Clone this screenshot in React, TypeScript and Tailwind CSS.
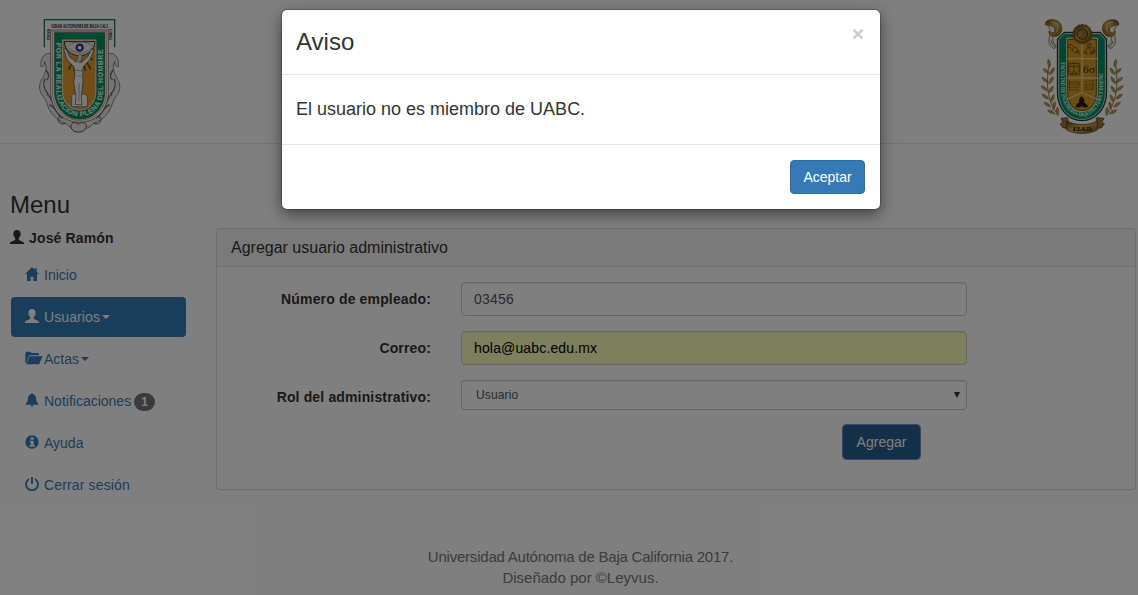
import React from "react";

type IconProps = { className?: string };

function UserIcon({ className = "" }: IconProps) {
  return (
    <svg viewBox="0 0 42 42" className={"inline-block h-3.5 w-3.5 " + className} fill="currentColor">
      <path d="M21 0c-7 0-11 5-11 11 0 4 1 7 3 10 2 3 3 4 3 7 0 2-2 3-5 4-6 2-10 3-11 6L0 42h42v-3c-1-4-5-5-11-7-3-1-5-2-5-4 0-3 1-4 3-7 2-3 3-6 3-10C32 5 28 0 21 0z" />
    </svg>
  );
}

function HomeIcon() {
  return (
    <svg viewBox="0 0 42 42" className="h-3.5 w-3.5" fill="currentColor">
      <path d="M21 0L0 21h6v21h11V29h8v13h11V21h6l-7-7V4h-6v4z" />
    </svg>
  );
}

function FolderIcon() {
  return (
    <svg viewBox="0 0 52 42" className="h-3.5 w-[18px] shrink-0" fill="currentColor">
      <path d="M0 35V6l4-4h11l4 4h19l3 3v4H12L3 35zM13 16h39L41 40H3z" />
    </svg>
  );
}

function BellIcon() {
  return (
    <svg viewBox="0 0 42 42" className="h-3.5 w-3.5" fill="currentColor">
      <path d="M21 0c2 0 3 1 3 4 5 1 9 6 9 12 1 8 2 11 6 14v5H3v-5c4-3 5-6 6-14 0-6 4-11 9-12 0-3 1-4 3-4zM17 37h8c0 6-8 6-8 0z" />
    </svg>
  );
}

function InfoIcon() {
  return (
    <svg viewBox="0 0 42 42" className="h-3.5 w-3.5" fill="currentColor">
      <path fillRule="evenodd" d="M21 1a20 20 0 1 0 0 40 20 20 0 0 0 0-40zM17 7h9v7h-9zM14 17h12v14h4v4H13v-4h4V21h-3z" />
    </svg>
  );
}

function PowerIcon() {
  return (
    <svg viewBox="0 0 42 42" className="h-3.5 w-3.5" fill="none" stroke="currentColor" strokeWidth="5.5">
      <path d="M12 6a18 18 0 1 0 18 0" />
      <path d="M21 0v21" />
    </svg>
  );
}

function Caret() {
  return <span className="ml-0.5 inline-block border-x-4 border-t-4 border-x-transparent border-t-current" />;
}

function UniversityCrest() {
  return (
    <svg viewBox="0 0 300 399" className="h-[133px] w-[100px]">
      <defs>
        <path id="motto" d="M79 98V242C79 290 112 319 149 319S219 290 219 242V90" />
      </defs>
      <g fill="#e8e8e8" stroke="#555" strokeWidth="2">
        <path d="M62 130C40 128 30 148 33 170c8 2 12-8 10-16 12 18 0 42-8 54-10 18-8 36 4 50 10 12 12 28 20 42 10 18 28 34 48 40 16 24 68 24 84 0 20-6 38-22 48-40 8-14 10-30 20-42 12-14 14-32 4-50-8-12-20-36-8-54-2 8 2 18 10 16 3-22-7-42-29-40z" />
        <path d="M45 206c-8 16-2 34 10 46M252 206c8 16 2 34-10 46M50 254c14 0 14 26 28 44M247 254c-14 0-14 26-28 44M48 180c8 10 10 22 2 30M249 180c-8 10-10 22-2 30M58 285c18 2 22 30 40 40M239 285c-18 2-22 30-40 40" fill="none" stroke="#666" strokeWidth="4" />
        <path d="M123 352c-4-14 14-20 22-8 8-12 26-6 24 8-4 18-42 20-46 0z" stroke="#555" strokeWidth="3" />
        <path d="M92 318c-16 10-4 30 14 22M205 318c16 10 4 30-14 22" fill="none" strokeWidth="3" />
      </g>
      <path d="M42 112V29h213v83h-16V66H58v46z" fill="#fafafa" />
      <path d="M43 112V29h211v83" fill="none" stroke="#00805a" strokeWidth="4" />
      <path d="M62 60h173v184c0 58-38 93-86 93s-87-35-87-93z" fill="#fff" stroke="#5a5148" strokeWidth="2" />
      <path d="M68 64h161v180c0 54-36 87-80 87s-81-33-81-87z" fill="none" stroke="#d9a870" strokeWidth="3" />
      <path d="M74 68h150v176c0 50-33 83-75 83s-75-33-75-83z" fill="#009463" stroke="#174c38" strokeWidth="2" />
      <path d="M97 90h101v152c0 36-21 58-49 58s-52-22-52-58z" fill="#e09d2c" stroke="#f3dfbb" strokeWidth="4" />
      <path d="M94 87h107v155c0 38-24 62-52 62s-55-24-55-62z" fill="none" stroke="#444" strokeWidth="1.5" />
      <path d="M103 95h92c-2 26-22 42-46 42s-44-16-46-42z" fill="#eee" stroke="#333" strokeWidth="3" />
      <path d="M113 109c20-18 56-18 76 0M116 114c18 20 52 20 70 0" fill="none" stroke="#888" strokeWidth="2" />
      <circle cx="149" cy="113" r="9" fill="#fff" stroke="#342d8c" strokeWidth="7" />
      <path d="M110 150l12-8M116 178l12-22M132 182l3-16M188 150l-12-8M182 178l-12-22M166 182l-3-16" stroke="#4b3b24" strokeWidth="4" />
      <path d="M125 257c8-10 20-6 21 8 2-14 18-18 26-6v31h-47z" fill="#f5f5f5" stroke="#555" strokeWidth="2" />
      <path d="M101 118l7-2 11 25 20 16c-4-16 14-21 16-7l-2 8 20-18 12-23 7 2-11 28-22 24-1 22 1 23-5 43 2 25h-20l2-25-7-43 4-23-3-22-21-22z" fill="#f5f5f5" stroke="#444" strokeWidth="2" />
      <path d="M143 139c2-8 13-8 13 1l-3 17h-8z" fill="#ddd" stroke="#444" strokeWidth="1.5" />
      <path d="M147 220v54M136 182h20M144 196l4 5 5-6" fill="none" stroke="#777" strokeWidth="2" />
      <text x="64" y="53" textLength="170" lengthAdjust="spacingAndGlyphs" className="font-['Liberation_Serif',serif] text-[18px] font-bold" fill="#000">
        SIDAD AUTONOMA DE BAJA CALI
      </text>
      <text transform="translate(60 90) rotate(-90)" textLength="34" lengthAdjust="spacingAndGlyphs" className="font-['Liberation_Serif',serif] text-[14px] font-bold" fill="#000">
        UNIVER
      </text>
      <text transform="translate(237 56) rotate(90)" textLength="34" lengthAdjust="spacingAndGlyphs" className="font-['Liberation_Serif',serif] text-[14px] font-bold" fill="#000">
        FORNIA
      </text>
      <text className="font-['Liberation_Sans',sans-serif] text-[21px] font-bold" fill="#f0fff8">
        <textPath href="#motto" textLength="500" lengthAdjust="spacing">
          POR LA REALIZACION PLENA DEL HOMBRE
        </textPath>
      </text>
    </svg>
  );
}

const leaves: [number, number, number][] = [
  [51, 160, -8], [43, 184, -50], [60, 184, 35], [39, 210, -50], [57, 211, 35], [37, 235, -50],
  [57, 239, 35], [40, 260, -52], [61, 265, 25], [46, 284, -55], [66, 287, 15], [58, 306, -62], [76, 304, 0],
];

function Laurel() {
  return (
    <g>
      <path d="M51 160C44 210 40 270 80 316" fill="none" stroke="#735b23" strokeWidth="2.5" />
      {leaves.map(([x, y, angle]) => (
        <path
          key={x + "-" + y}
          d="M0 13C-6 3-5-7 0-13 6-6 6 4 0 13z"
          transform={`translate(${x} ${y}) rotate(${angle})`}
          fill="url(#gold)"
          stroke="#8a713a"
          strokeWidth="1"
        />
      ))}
    </g>
  );
}

function RamHorn() {
  return (
    <g>
      <path d="M48 50c8-10 18-8 22 0 4 14-5 22-7 32-2 14 4 18 10 27l-6 7c-16-8-18-18-15-36 2-12 6-20-4-30z" fill="#f3f0e8" stroke="#5c4a20" strokeWidth="2" />
      <path d="M41 45c-4-18 24-20 39-10 15 12 12 38-7 44-14 3-24-5-22-16 5 8 18 7 18-3 0-12-18-14-28-15z" fill="url(#gold)" stroke="#5e4515" strokeWidth="2" />
      <path d="M58 36c18 0 26 14 15 29" fill="none" stroke="#e3cf94" strokeWidth="3" />
      <path d="M58 92c1 10 7 14 12 19" fill="none" stroke="#5e4515" strokeWidth="2" />
    </g>
  );
}

function FacultyCrest() {
  const teeth = Array.from({ length: 14 }, (_, i) => (i * 360) / 14);
  return (
    <svg viewBox="0 0 300 399" className="h-[133px] w-[100px]">
      <defs>
        <linearGradient id="gold" x1="0" x2="1" y1="0" y2="1">
          <stop offset="0" stopColor="#5a4316" />
          <stop offset=".45" stopColor="#c9a74e" />
          <stop offset="1" stopColor="#765519" />
        </linearGradient>
        <path id="faculty" d="M88 157V246C90 292 120 318 150 319S208 290 212 246V150" />
      </defs>
      <RamHorn />
      <g transform="translate(301 0) scale(-1 1)">
        <RamHorn />
      </g>
      <Laurel />
      <g transform="translate(301 0) scale(-1 1)">
        <Laurel />
      </g>
      <path d="M76 87l20-20h110l18 20v158c0 54-34 87-74 87s-74-33-74-87z" fill="#009166" stroke="#222" strokeWidth="3" />
      <path d="M80 89l18-18h106l16 18v156c0 51-32 83-70 83s-70-32-70-83z" fill="none" stroke="#ddd5c4" strokeWidth="3" />
      <path d="M104 84h92v164c0 34-20 57-46 57s-46-23-46-57z" fill="#d69a24" stroke="#eee1c0" strokeWidth="3" />
      <path d="M107 88h86v159c0 34-18 54-43 54s-43-20-43-54z" fill="none" stroke="#35300f" strokeWidth="2" />
      <path d="M150 100v148M106 146h89M106 204h89M107 267l43-19 43 19" fill="none" stroke="#e9ddba" strokeWidth="3" />
      <g fill="none" stroke="#5c471b" strokeWidth="2.2">
        <path d="M111 104c10-4 12 8 20 9s3 12 12 14M107 112c14-2 12 12 20 14s10-4 17 9M116 102l-6 8M128 110l-8 10M140 120l-9 11" />
        <path d="M171 109l-10 15M171 109l7 18M168 105l12-4M183 111l3 14M160 130l8 3M180 132l7-3" />
        <circle cx="171" cy="108" r="6" />
        <circle cx="160" cy="126" r="4" />
        <circle cx="178" cy="129" r="4" />
        <circle cx="186" cy="123" r="4" />
        <circle cx="126" cy="176" r="16" />
        <path d="M109 160h34v33h-34zM126 164v18M113 170h26M126 181l-8 13M126 181l8 13" />
        <path d="M106 217h38M106 224h35M106 232h31M112 240h30M113 212v30M130 212l12 7-5 24M157 216l30-5M157 223h32M157 231h30M158 238h28M162 218v20M184 212l-4 28" strokeWidth="1.5" />
      </g>
      <text x="153" y="188" textLength="36" className="font-['Liberation_Serif',serif] text-[34px]" fill="#302411">
        6σ
      </text>
      <g fill="#211b18">
        <path d="M143 280c-5-8 0-17 6-21 6 5 12 14 6 21z" />
        <path d="M148 279c-10-3-16 3-17 12 9 3 18 1 20-6zM150 279c8-3 17 3 18 12-9 3-18 1-21-6z" />
        <circle cx="150" cy="281" r="6" />
      </g>
      <g fill="#93712b" stroke="#463514" strokeWidth="1.5">
        {teeth.map((angle) => (
          <rect key={angle} x="146" y="43" width="10" height="12" rx="2" transform={`rotate(${angle} 151 72)`} />
        ))}
        <circle cx="151" cy="72" r="24" fill="url(#gold)" />
        <circle cx="151" cy="72" r="16" fill="#b38a36" strokeWidth="3" />
        <path d="M139 66l10-5 7 8-5 10-9 4M155 60l8 7-2 12-7 4" fill="none" strokeWidth="2" />
      </g>
      <text className="font-['Liberation_Serif',serif] text-[17px] font-bold" fill="#edfff7">
        <textPath href="#faculty" textLength="355" lengthAdjust="spacingAndGlyphs">
          FACULTAD DE INGENIERIA ARQUITECTURA Y DISEÑO
        </textPath>
      </text>
      <path d="M87 325l20-2 5 34-20-4-7-12 7-3zM216 325l-22-2-5 34 20-4 8-12-8-3z" fill="#9c7a36" stroke="#49371a" strokeWidth="2" />
      <path d="M104 333c29 14 64 14 92 0v27c-27 14-64 14-92 0z" fill="url(#gold)" stroke="#4e3818" strokeWidth="2" />
      <text x="123" y="363" textLength="59" className="font-['Liberation_Serif',serif] text-[20px] font-bold" fill="#18130b">
        F.I.A.D.
      </text>
    </svg>
  );
}

function MenuItem({ icon, active, children }: { icon: React.ReactNode; active?: boolean; children: React.ReactNode }) {
  return (
    <a className={"flex h-10 items-center rounded pl-3.5 text-sm " + (active ? "bg-[#337ab7] text-white" : "text-[#337ab7]")}>
      <span className="-mt-0.5 flex w-[19px] shrink-0">{icon}</span>
      {children}
    </a>
  );
}

function FormRow({ label, children }: { label: string; children: React.ReactNode }) {
  return (
    <div className="flex items-start">
      <label className="w-[214px] shrink-0 pt-[7px] text-right text-sm font-bold tracking-[0.15px]">{label}</label>
      <div className="ml-[30px] w-[506px]">{children}</div>
    </div>
  );
}

export default function App() {
  return (
    <div className="relative h-[595px] w-[1138px] overflow-hidden bg-white font-['Liberation_Sans',Arial,sans-serif] text-[#333]">
      <header className="flex h-36 items-start justify-between border-b border-[#e7e7e7] pt-2.5 pr-1.5 pl-[30px]">
        <UniversityCrest />
        <FacultyCrest />
      </header>

      <div className="flex">
        <aside className="ml-[11px] w-[175px] shrink-0 pt-12">
          <h3 className="-ml-px text-2xl leading-[26px]">Menu</h3>
          <div className="mt-2.5 -ml-px flex h-5 items-center text-sm font-bold tracking-[0.15px]">
            <UserIcon className="mr-[5px] -mt-0.5" />
            José Ramón
          </div>
          <nav className="mt-[7px] flex flex-col gap-0.5">
            <MenuItem icon={<HomeIcon />}>Inicio</MenuItem>
            <MenuItem icon={<UserIcon />} active>
              <span className="tracking-[0.1px]">Usuarios</span>
              <Caret />
            </MenuItem>
            <MenuItem icon={<FolderIcon />}>
              Actas
              <Caret />
            </MenuItem>
            <MenuItem icon={<BellIcon />}>
              <span>Notificaciones</span>
              <span className="mt-0.5 ml-[3px] flex h-[18px] w-[21px] items-center justify-center rounded-[10px] bg-[#777] text-xs font-bold text-white">
                1
              </span>
            </MenuItem>
            <MenuItem icon={<InfoIcon />}>Ayuda</MenuItem>
            <MenuItem icon={<PowerIcon />}>
              <span className="tracking-[0.15px]">Cerrar sesión</span>
            </MenuItem>
          </nav>
        </aside>

        <main className="mt-[84px] ml-[30px] h-[262px] w-[920px] rounded border border-[#ddd] shadow-[0_1px_1px_rgba(0,0,0,0.05)]">
          <div className="flex h-[38px] items-center border-b border-[#ddd] bg-[#f5f5f5] px-3.5 text-base">
            Agregar usuario administrativo
          </div>
          <form className="flex flex-col gap-[15px] pt-[15px]">
            <FormRow label="Número de empleado:">
              <div className="flex h-[34px] items-center rounded border border-[#ccc] px-3 text-sm tracking-[0.2px] text-[#555] shadow-[inset_0_1px_1px_rgba(0,0,0,0.075)]">
                03456
              </div>
            </FormRow>
            <FormRow label="Correo:">
              <div className="flex h-[34px] items-center rounded border border-[#ccc] bg-[#faffbd] px-3 text-sm tracking-[0.15px] text-black shadow-[inset_0_1px_1px_rgba(0,0,0,0.075)]">
                hola@uabc.edu.mx
              </div>
            </FormRow>
            <FormRow label="Rol del administrativo:">
              <div className="flex h-[30px] items-center justify-between rounded-[3px] border border-[#ccc] pr-1.5 pl-3.5 text-xs tracking-[0.15px] text-[#555] shadow-[inset_0_1px_1px_rgba(0,0,0,0.075)]">
                Usuario
                <svg viewBox="0 0 6 6" className="h-1.5 w-1.5" fill="#333">
                  <path d="M0 0h6L3 6z" />
                </svg>
              </div>
            </FormRow>
            <button
              type="button"
              className="ml-[626px] h-[34px] w-[77px] rounded-[3px] bg-[#286090] text-sm text-white outline-1 outline-[#6b93d6]"
            >
              Agregar
            </button>
          </form>
        </main>
      </div>

      <footer className="mt-[41px] pl-[23px]">
        <p className="text-center text-[15px] leading-[21px] tracking-[-0.22px] text-[#777]">
          Universidad Autónoma de Baja California 2017.
        </p>
        <p className="text-center text-[15px] leading-[21px] text-[#777]">Diseñado por ©Leyvus.</p>
      </footer>

      <div className="absolute inset-0 bg-black/50">
        <section
          role="dialog"
          className="mx-auto mt-2.5 flex h-[199px] w-[598px] translate-x-3 flex-col rounded-[5px] bg-white shadow-[0_5px_15px_rgba(0,0,0,0.5),0_0_0_1px_rgba(0,0,0,0.2)]"
        >
          <div className="flex h-[65px] justify-between border-b border-[#e5e5e5] pr-4 pl-3.5">
            <h3 className="pt-[19px] text-2xl leading-[26px]">Aviso</h3>
            <span className="pt-[13px] text-[21px] leading-[21px] font-bold text-[#ccc]">×</span>
          </div>
          <div className="flex h-[70px] items-center border-b border-[#e5e5e5] px-3.5 pb-0.5 text-lg">
            El usuario no es miembro de UABC.
          </div>
          <div className="flex justify-end px-[15px] pt-[15px]">
            <button type="button" className="h-[34px] w-[75px] rounded border border-[#2e6da4] bg-[#337ab7] text-sm text-white">
              Aceptar
            </button>
          </div>
        </section>
      </div>
    </div>
  );
}
